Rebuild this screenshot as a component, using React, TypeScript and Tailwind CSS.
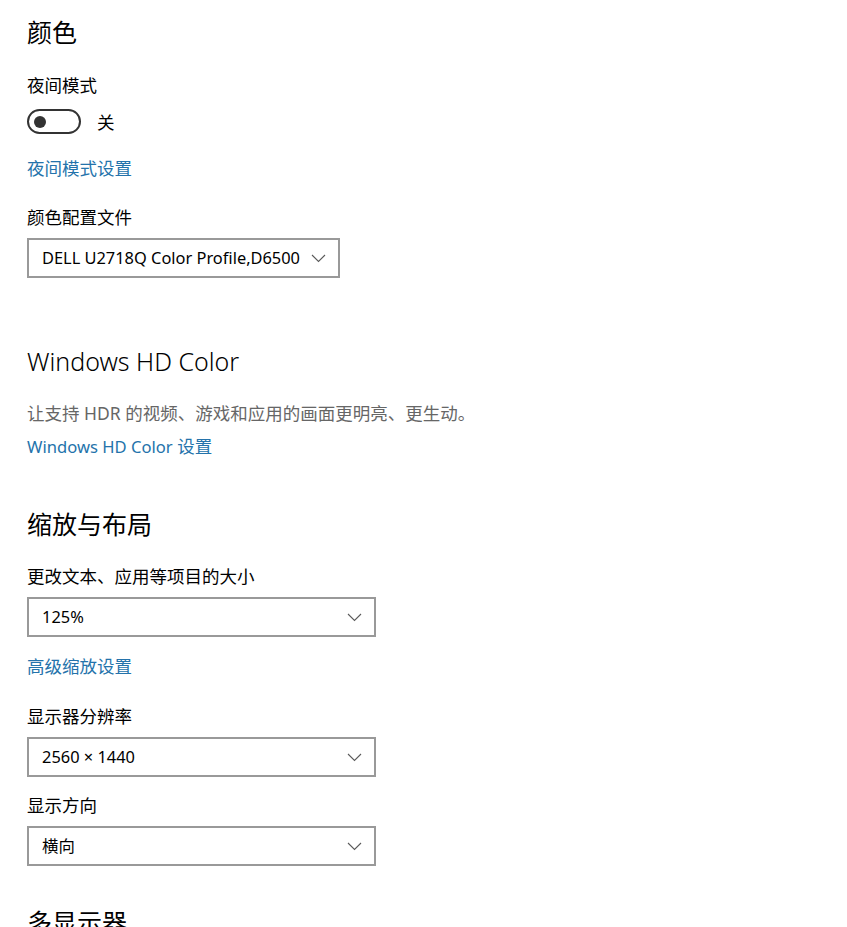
import React from "react";

const font = { fontFamily: '"Noto Sans", "Noto Sans CJK SC", sans-serif' };

function Chevron() {
  return (
    <svg width="15" height="9" viewBox="0 0 15 9" fill="none" className="shrink-0">
      <path d="M1 1 L7.5 7.5 L14 1" stroke="#5a5a5a" strokeWidth="1.1" />
    </svg>
  );
}

function Select({ value, width }: { value: string; width: string }) {
  return (
    <div
      className={`mt-[9px] h-[40px] ${width} border-2 border-[#999999] bg-white flex items-center justify-between pl-[13px] pr-[12px]`}
    >
      <span className="text-[16.4px] leading-[24px] text-black whitespace-nowrap">{value}</span>
      <Chevron />
    </div>
  );
}

export default function App() {
  return (
    <div className="min-h-[927px] bg-white text-black overflow-hidden" style={font}>
      <div className="pl-[27px] pt-[16px]">
        <h2 className="text-[25px] leading-[32px] font-normal">颜色</h2>

        <div className="mt-[25px] text-[17.5px] leading-[24px]">夜间模式</div>
        <div className="mt-[12px] flex items-center">
          <div className="w-[54px] h-[25px] rounded-full border-2 border-[#333333] flex items-center pl-[5px]">
            <div className="w-[12px] h-[12px] rounded-full bg-[#333333]" />
          </div>
          <span className="ml-[16px] text-[17.5px] leading-[24px]">关</span>
        </div>

        <div className="mt-[22px] text-[17.5px] leading-[24px] text-[#2473ab]">夜间模式设置</div>

        <div className="mt-[25px] text-[17.5px] leading-[24px]">颜色配置文件</div>
        <Select value="DELL U2718Q Color Profile,D6500" width="w-[313px]" />

        <h2 className="mt-[67px] text-[25px] leading-[32px] font-light">Windows HD Color</h2>
        <div className="mt-[24px] text-[17.5px] leading-[24px] text-[#666666]">
          让支持 HDR 的视频、游戏和应用的画面更明亮、更生动。
        </div>
        <div className="mt-[9px] h-[24px] text-[17.5px] leading-[24px] text-[#2473ab]">
          <span className="text-[16.6px] leading-[24px]">Windows HD Color</span> 设置
        </div>

        <h2 className="mt-[50px] text-[25px] leading-[32px] font-normal">缩放与布局</h2>
        <div className="mt-[24px] text-[17.5px] leading-[24px]">更改文本、应用等项目的大小</div>
        <Select value="125%" width="w-[349px]" />
        <div className="mt-[17px] text-[17.5px] leading-[24px] text-[#2473ab]">高级缩放设置</div>

        <div className="mt-[26px] text-[17.5px] leading-[24px]">显示器分辨率</div>
        <Select value="2560 × 1440" width="w-[349px]" />

        <div className="mt-[16px] text-[17.5px] leading-[24px]">显示方向</div>
        <Select value="横向" width="w-[349px]" />

        <h2 className="mt-[40px] text-[25px] leading-[32px] font-normal">多显示器</h2>
      </div>
    </div>
  );
}
